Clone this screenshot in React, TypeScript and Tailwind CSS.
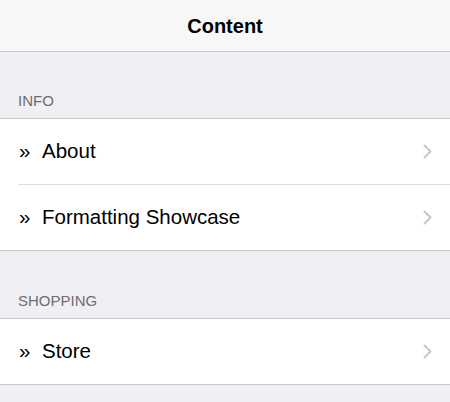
const sections = [
  { title: 'INFO', items: ['About', 'Formatting Showcase'] },
  { title: 'SHOPPING', items: ['Store'] },
];

function Chevron() {
  return (
    <svg width="9" height="15" viewBox="0 0 9 15" fill="none">
      <path d="M1.5 1.5 L7.5 7.5 L1.5 13.5" stroke="#c7c7cc" strokeWidth="2" strokeLinecap="round" strokeLinejoin="round" />
    </svg>
  );
}

export default function App() {
  return (
    <div className="min-h-screen bg-[#efeff4] font-['Liberation_Sans',Arial,sans-serif]">
      {/* Nav bar */}
      <div className="h-[52px] bg-[#f7f7f7] border-b border-[#c8c7cc] flex items-center justify-center">
        <h1 className="text-[20px] font-bold text-black">Content</h1>
      </div>

      {sections.map((s, si) => (
        <div key={s.title}>
          <div className={`${si === 0 ? 'h-[66px]' : 'h-[67px]'} flex items-end pb-[8px] px-[18px]`}>
            <span className="text-[15px] leading-[18px] text-[#6d6d72]">{s.title}</span>
          </div>
          <div className="bg-white border-y border-[#c8c7cc]">
            {s.items.map((item, i) => (
              <div key={item}>
                {i > 0 && <div className="ml-[18px] h-px bg-[#dcdce0]" />}
                <div className="h-[65px] flex items-center pl-[19px] pr-[18px]">
                  <div className="flex-1 flex items-baseline text-[20.5px] text-black">
                    <span className="w-[23px]">»</span>
                    <span>{item}</span>
                  </div>
                  <Chevron />
                </div>
              </div>
            ))}
          </div>
        </div>
      ))}
    </div>
  );
}
